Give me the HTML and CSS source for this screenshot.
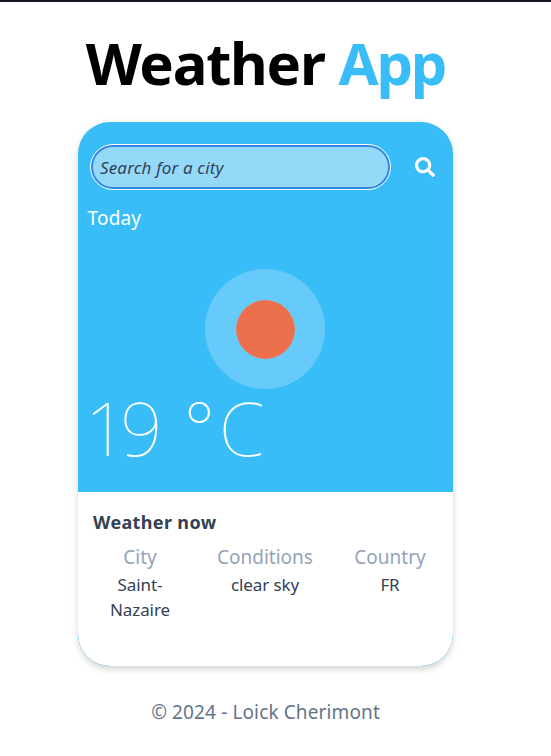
FILE: index.html
```html
<!DOCTYPE html>
<html lang="en">
<head>
<meta charset="utf-8">
<title>Weather App</title>
<link rel="stylesheet" href="styles.css">
</head>
<body>
<h1 class="title">Weather <span class="accent">App</span></h1>
<main class="card">
  <section class="top">
    <form class="search">
      <input class="field" type="text" placeholder="Search for a city" aria-label="City">
      <button class="submit" type="button" aria-label="Search">
        <svg viewBox="0 0 512 512" width="20" height="20" fill="currentColor"><path d="M505 442.700 405.300 343c-4.500-4.500-10.600-7-17-7H372c27.600-35.300 44-79.700 44-128C416 93.100 322.900 0 208 0S0 93.100 0 208s93.100 208 208 208c48.300 0 92.700-16.400 128-44v16.300c0 6.400 2.500 12.500 7 17l99.700 99.700c9.400 9.400 24.600 9.400 33.900 0l28.300-28.300c9.400-9.400 9.400-24.600.1-34zM208 336c-70.700 0-128-57.200-128-128 0-70.700 57.200-128 128-128 70.700 0 128 57.200 128 128 0 70.700-57.200 128-128 128z"/></svg>
      </button>
    </form>
    <p class="today">Today</p>
    <div class="halo"><div class="sun"></div></div>
    <p class="temp"><span class="value">19</span><span class="unit">°C</span></p>
  </section>
  <section class="details">
    <h2 class="heading">Weather now</h2>
    <dl class="facts">
      <div><dt>City</dt><dd>Saint-<br>Nazaire</dd></div>
      <div><dt>Conditions</dt><dd>clear sky</dd></div>
      <div><dt>Country</dt><dd>FR</dd></div>
    </dl>
  </section>
</main>
<footer class="footer">© 2024 - Loick Cherimont</footer>
</body>
</html>
```
FILE: styles.css
```css
* { box-sizing: border-box; margin: 0; padding: 0; }
body {
  height: 756px;
  overflow: hidden;
  border-top: 2px solid #17151f;
  padding-right: 20px;
  background: #fff;
  font-family: "Noto Sans", sans-serif;
  display: flex;
  flex-direction: column;
  align-items: center;
}
.title {
  height: 120px;
  padding-top: 20px;
  font-size: 58px;
  line-height: 82px;
  font-weight: 700;
  white-space: nowrap;
  letter-spacing: -1.25px;
  color: #000;
}
.accent { color: #38bdf8; letter-spacing: -2.2px; }
.card {
  width: 375px;
  height: 544px;
  flex: none;
  border-radius: 32px;
  overflow: hidden;
  background: #38bdf8;
  box-shadow: 0 4px 6px -1px rgba(0,0,0,.14), 0 2px 12px rgba(0,0,0,.06);
}
.top { height: 370px; color: #fff; padding-top: 23px; }
.search { display: flex; align-items: center; height: 44px; padding-left: 13px; }
.field {
  width: 299px;
  height: 44px;
  border: 2px solid #3584e4;
  border-radius: 22px;
  outline: 1px solid #fff;
  background: #95d9f9;
  padding: 0 7px;
  font: italic 17px/24px "Noto Sans", sans-serif;
  letter-spacing: .15px;
}
.field::placeholder { color: #334155; opacity: 1; }
.submit { border: 0; background: none; color: #fff; margin-left: 25px; width: 20px; height: 20px; }
.submit svg { display: block; }
.today { margin: 15px 0 0 9.500px; font-size: 19px; line-height: 28px; height: 28px; letter-spacing: .2px; }
.halo {
  width: 120px; height: 120px;
  margin: 37px 0 0 127px;
  border-radius: 50%;
  background: #66cbfa;
  display: grid;
  place-items: center;
}
.sun { width: 59px; height: 59px; border-radius: 50%; background: #eb6f4b; border: 1px solid #ec7857; }
.temp {
  display: flex;
  gap: 28px;
  margin-left: 7px;
  font-size: 74px;
  line-height: 77px;
  font-weight: 100;
  white-space: nowrap;
}
.value { letter-spacing: -7px; }
.unit { letter-spacing: 4px; }
.details { height: 174px; padding: 16px 0 0; border-radius: 0 0 32px 32px; background: #fff; color: #334155; }
.heading { margin-left: 15px; font-size: 18px; line-height: 28px; font-weight: 700; letter-spacing: .35px; }
.facts { display: grid; grid-template-columns: repeat(3, 1fr); margin: 7px .5px 0 -.5px; text-align: center; }
.facts dt { font-size: 19px; line-height: 28px; color: #94a3b8; }
.facts dd { font-size: 17px; line-height: 25px; padding-top: 1px; margin-bottom: -1px; letter-spacing: -.1px; }
.footer { margin-top: 32px; font-size: 19px; line-height: 28px; color: #64748b; white-space: nowrap; letter-spacing: .12px; }
```
